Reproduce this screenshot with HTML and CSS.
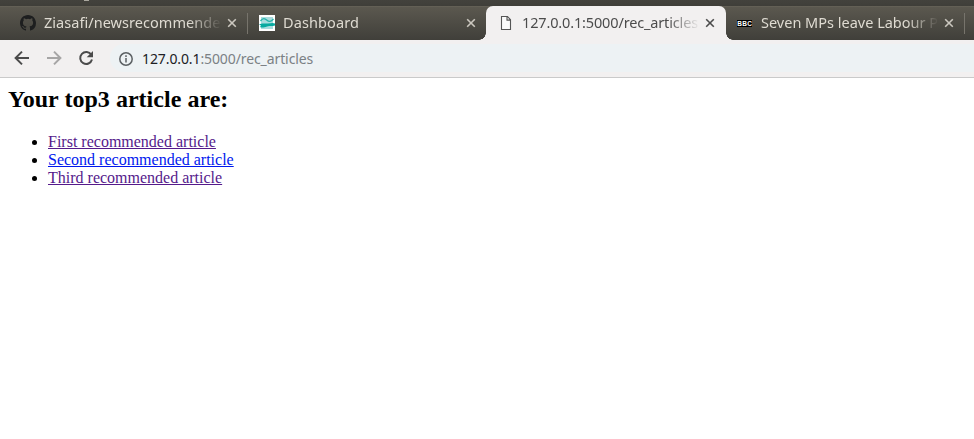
FILE: index.html
```html
<!DOCTYPE html>
<html lang="en">
<head>
<meta charset="utf-8">
<title>127.0.0.1:5000/rec_articles</title>
<link rel="stylesheet" href="styles.css">
</head>
<body>
<header class="browser">
  <div class="titlebar"><i class="descender"></i></div>
  <nav class="tabs">
    <div class="tab separated">
      <svg class="icon" viewBox="0 0 16 16"><path fill="#1d1e1f" d="M8 0C3.58 0 0 3.58 0 8c0 3.54 2.29 6.53 5.47 7.59.4.07.55-.17.55-.38 0-.19-.01-.82-.01-1.49-2.01.37-2.53-.49-2.69-.94-.09-.23-.48-.94-.82-1.13-.28-.15-.68-.52-.01-.53.63-.01 1.08.58 1.23.82.72 1.21 1.87.87 2.33.66.07-.52.28-.87.51-1.07-1.78-.2-3.64-.89-3.64-3.95 0-.87.31-1.59.82-2.15-.08-.2-.36-1.02.08-2.12 0 0 .67-.21 2.2.82a7.6 7.6 0 0 1 4 0c1.53-1.04 2.2-.82 2.2-.82.44 1.1.16 1.92.08 2.12.51.56.82 1.27.82 2.15 0 3.07-1.87 3.75-3.65 3.95.29.25.54.73.54 1.48 0 1.07-.01 1.93-.01 2.2 0 .21.15.46.55.38A8 8 0 0 0 16 8c0-4.42-3.58-8-8-8z"/></svg>
      <span class="title github">Ziasafi/newsrecommender</span>
      <svg class="close" viewBox="0 0 10 10"><path d="M1.200 1.200l7.600 7.600M8.800 1.200l-7.600 7.600"/></svg>
    </div>
    <div class="tab">
      <svg class="icon" viewBox="0 0 16 16"><path fill="#fff" d="M0 0h16v16H0z"/><path fill="#a9dcde" d="M2 2h12v12H2z"/><path fill="none" stroke="#25b3ab" stroke-width="1.300" d="M1.500 6C4 2.500 6 3.500 8 5.300s4 1.500 6.500-1.300"/><path fill="#08aaa0" d="M0 9.500C4 7.500 6 9 9 8.500s5-1 7 0v2c-3 1-5 0-8 1s-5 1.500-7 .5l1-1.500z"/></svg>
      <span class="title dashboard">Dashboard</span>
      <svg class="close" viewBox="0 0 10 10"><path d="M1.200 1.200l7.600 7.600M8.800 1.200l-7.600 7.600"/></svg>
    </div>
    <div class="tab active">
      <svg class="icon" viewBox="0 0 16 16"><path fill="#fafafa" stroke="#555" stroke-width="1.100" d="M3.500 1.500h6l3 3.300v9.700h-9zM9 1.500v3.600h3.500"/></svg>
      <span class="title local">127.0.0.1:5000/rec_articles</span>
      <svg class="close" viewBox="0 0 10 10"><path d="M1.200 1.200l7.600 7.600M8.800 1.200l-7.600 7.600"/></svg>
    </div>
    <div class="tab separated">
      <span class="icon bbc"><b>B</b><b>B</b><b>C</b></span>
      <span class="title news">Seven MPs leave Labour Party</span>
      <svg class="close" viewBox="0 0 10 10"><path d="M1.200 1.200l7.600 7.600M8.800 1.200l-7.600 7.600"/></svg>
    </div>
  </nav>
  <div class="toolbar">
    <svg class="tool" viewBox="0 0 16 16"><path d="M15 8H2M8 1.600L1.600 8 8 14.400"/></svg>
    <svg class="tool disabled" viewBox="0 0 16 16"><path d="M1 8h13M8 1.600L14.400 8 8 14.400"/></svg>
    <svg class="tool" viewBox="0 0 16 16"><path d="M13.300 4.800A6 6 0 1 0 14 9.600"/><path class="solid" d="M15 1v6.300H8.700z"/></svg>
    <div class="address">
      <svg class="info" viewBox="0 0 14 14"><circle cx="7" cy="7" r="6.200"/><path d="M7 6v4.500M7 3.300v1.600"/></svg>
      <span class="url"><span class="host">127.0.0.1</span><span class="path">:5000/rec_articles</span></span>
    </div>
  </div>
</header>
<main>
  <h1>Your top3 article are:</h1>
  <ul>
    <li><a class="visited" href="#first">First recommended article</a></li>
    <li><a href="#second">Second recommended article</a></li>
    <li><a class="visited" href="#third">Third recommended article</a></li>
  </ul>
</main>
</body>
</html>
```
FILE: styles.css
```css
* { box-sizing: border-box; }
body {
  margin: 0;
  height: 439px;
  overflow: hidden;
  background: #fff;
  font-family: "Liberation Serif", serif;
  font-size: 16px;
}
svg { display: block; flex: none; }
.browser { font-family: "Noto Sans", sans-serif; }
.titlebar { height: 6px; padding-left: 84px; background: linear-gradient(#43423d, #3f3e39); }
.descender { display: block; width: 5px; height: 1px; background: #aaa79f; }
.tabs {
  display: flex;
  height: 34px;
  padding-left: 8px;
  background: linear-gradient(#6b675c 0, #5b584f 1px, #403f3a);
}
.tab {
  position: relative;
  display: flex;
  flex: none;
  align-items: center;
  width: 239px;
  padding-left: 12px;
  color: #dfdbd2;
}
.separated::after {
  content: "";
  position: absolute;
  right: -1px;
  top: 7px;
  width: 1px;
  height: 21px;
  background: #77746c;
}
.icon { width: 16px; height: 16px; flex: none; }
.title {
  width: 176px;
  margin: 0 7px 2px 8px;
  overflow: hidden;
  white-space: nowrap;
  font-size: 14.5px;
  line-height: 22px;
  -webkit-mask-image: linear-gradient(90deg, #000 145px, transparent 178px);
  mask-image: linear-gradient(90deg, #000 145px, transparent 178px);
}
.github { letter-spacing: 0.04px; }
.dashboard { letter-spacing: 0.1px; }
.local { letter-spacing: -0.15px; }
.close { width: 10px; height: 10px; fill: none; stroke: #cbc7bf; stroke-width: 1.6; }
.active {
  width: 240px;
  margin-right: -1px;
  border-radius: 7px 7px 0 0;
  background: #f2f0f0;
  color: #4c4c4c;
}
.active .close { stroke: #4c4c4c; }
.active::before, .active::after {
  content: "";
  position: absolute;
  bottom: 0;
  width: 7px;
  height: 7px;
}
.active::before { left: -7px; background: radial-gradient(circle at 0 0, transparent 6.500px, #f2f0f0 7px); }
.active::after { right: -7px; background: radial-gradient(circle at 100% 0, transparent 6.500px, #f2f0f0 7px); }
.bbc {
  display: flex;
  align-items: center;
  justify-content: space-around;
  height: 7px;
  background: #000;
  background-clip: content-box;
  padding-right: 1px;
  color: #fff;
  font: bold 6.5px/7px "Liberation Sans Narrow", "Liberation Sans", sans-serif;
}
.bbc b { display: block; }
.toolbar {
  display: flex;
  align-items: center;
  height: 38px;
  padding: 0 0 1px 14px;
  border-bottom: 1px solid #cacaca;
  background: #f2f0f0;
}
.tool { width: 16px; height: 16px; margin-right: 16px; fill: none; stroke: #4b4b4b; stroke-width: 2; }
.tool .solid { fill: #4b4b4b; stroke: none; }
.disabled { stroke: #a6a5a5; }
.address {
  display: flex;
  align-items: center;
  flex: 1;
  height: 28px;
  padding: 1px 0 0 9px;
  border-radius: 14px 0 0 14px;
  background: #edf2f4;
}
.info { width: 14px; height: 14px; margin-right: 9px; fill: none; stroke: #5b6063; stroke-width: 1.5; }
.url { display: flex; padding-top: 1px; font-size: 14px; line-height: 20px; }
.host { color: #202124; letter-spacing: -0.1px; }
.path { color: #7b8185; letter-spacing: -0.1px; }
main { padding: 8px 8px 0; }
h1 { margin: 0 0 20px; font-size: 24px; line-height: 27px; letter-spacing: 0.03px; color: #000; }
ul { margin: 0; padding-left: 40px; line-height: 18px; }
a { color: #0018ee; }
.visited { color: #551a8b; }
```
